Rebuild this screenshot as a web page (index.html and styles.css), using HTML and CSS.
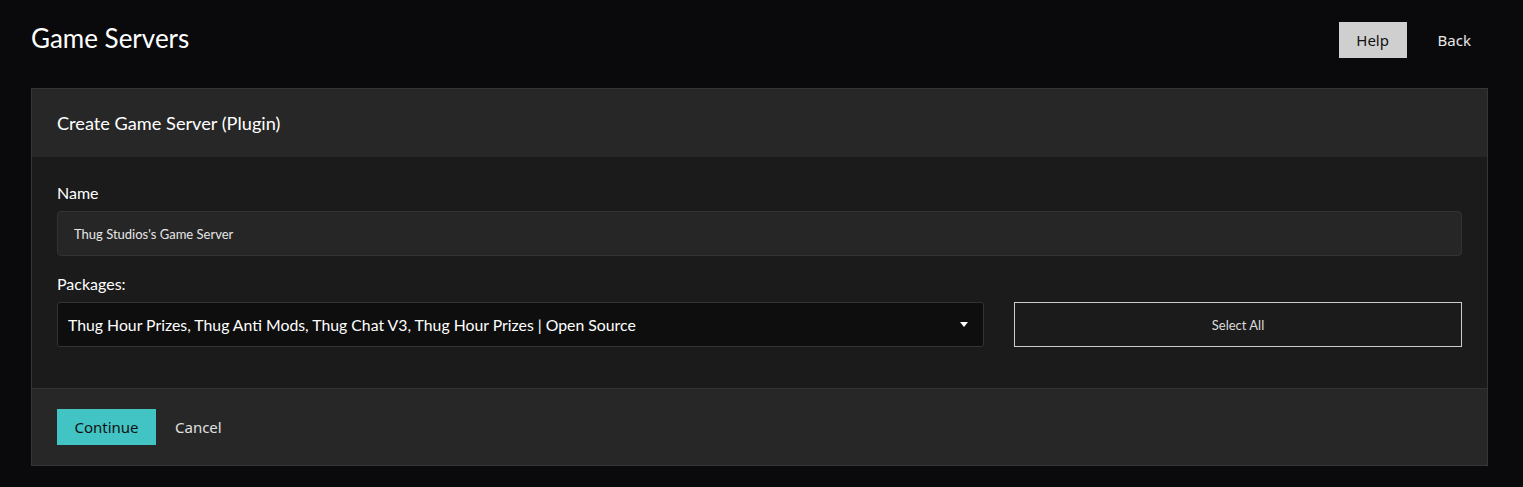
FILE: index.html
```html
<!DOCTYPE html>
<html lang="en">
<head>
    <meta charset="UTF-8">
    <title>Game Servers</title>
    <link rel="stylesheet" href="styles.css">
</head>
<body>

    <div class="page">
        <div class="top-bar">
            <h1>Game Servers</h1>
            <div class="top-actions">
                <button class="btn-help">Help</button>
                <button class="btn-back">Back</button>
            </div>
        </div>

        <div class="card">
            <div class="card-header">Create Game Server (Plugin)</div>

            <div class="card-body">
                <div class="form-group">
                    <label for="serverName">Name</label>
                    <input type="text" id="serverName" class="name-input" value="Thug Studios's Game Server">
                </div>
                <div class="form-group">
                    <label>Packages:</label>
                    <div class="packages-row">
                        <div class="select-box">
                            <span>Thug Hour Prizes, Thug Anti Mods, Thug Chat V3, Thug Hour Prizes | Open Source</span>
                            <svg class="caret" width="8" height="5" viewBox="0 0 8 5"><path d="M0 0 H8 L4 5 Z" fill="#ffffff"/></svg>
                        </div>
                        <button class="btn-select-all">Select All</button>
                    </div>
                </div>
            </div>

            <div class="card-footer">
                <button class="btn-continue">Continue</button>
                <button class="btn-cancel">Cancel</button>
            </div>
        </div>
    </div>

</body>
</html>
```

FILE: styles.css
```css
/* Reset */
* {
    margin: 0;
    padding: 0;
    box-sizing: border-box;
}
body {
    font-family: 'Lato', 'Noto Sans', sans-serif;
    background-color: #0a0a0c;
    color: #ffffff;
}
button {
    font-family: 'Noto Sans', 'Open Sans', sans-serif;
    border: none;
    background: none;
    cursor: pointer;
}

.page {
    padding: 22px 35px 21px 31px;
}

/* Top bar */
.top-bar {
    display: flex;
    justify-content: space-between;
    align-items: flex-start;
    height: 66px;
}
.top-bar h1 {
    font-size: 26px;
    font-weight: 400;
    line-height: 30px;
    margin-top: 1px;
}
.top-actions {
    display: flex;
    align-items: center;
}
.btn-help {
    background-color: #cfcfcf;
    color: #111111;
    font-size: 15px;
    width: 68px;
    height: 36px;
}
.btn-back {
    color: #e8e8e8;
    font-size: 15px;
    height: 36px;
    padding: 0 17px 0 31px;
}

/* Card */
.card {
    border: 1px solid #363636;
}
.card-header {
    background-color: #272727;
    font-size: 18.2px;
    height: 68px;
    line-height: 68px;
    padding: 0 25px;
}
.card-body {
    background-color: #1b1b1b;
    padding: 25px 25px 41px;
}
.form-group + .form-group {
    margin-top: 17px;
}
.form-group label {
    display: block;
    font-size: 16px;
    line-height: 21px;
    margin-bottom: 8px;
}
.name-input {
    width: 100%;
    height: 45px;
    background-color: #262626;
    border: 1px solid #333333;
    border-radius: 4px;
    color: #e6e6e6;
    font-family: 'Lato', sans-serif;
    font-size: 13px;
    padding: 0 16px;
    outline: none;
}

.packages-row {
    display: grid;
    grid-template-columns: 927fr 448fr;
    gap: 30px;
}
.select-box {
    height: 45px;
    background-color: #0e0e0e;
    border: 1px solid #333333;
    border-radius: 3px;
    display: flex;
    align-items: center;
    justify-content: space-between;
    padding: 0 15px 0 10px;
    font-size: 15.8px;
}
.btn-select-all {
    height: 45px;
    border: 1px solid #cccccc;
    color: #dddddd;
    font-family: 'Lato', sans-serif;
    font-size: 13px;
}

/* Footer */
.card-footer {
    background-color: #272727;
    border-top: 1px solid #333333;
    padding: 20px 25px;
    display: flex;
    align-items: center;
}
.btn-continue {
    background-color: #42c4c4;
    color: #111111;
    font-size: 15px;
    width: 99px;
    height: 36px;
}
.btn-cancel {
    color: #e0e0e0;
    font-size: 15px;
    margin-left: 19px;
}
```
